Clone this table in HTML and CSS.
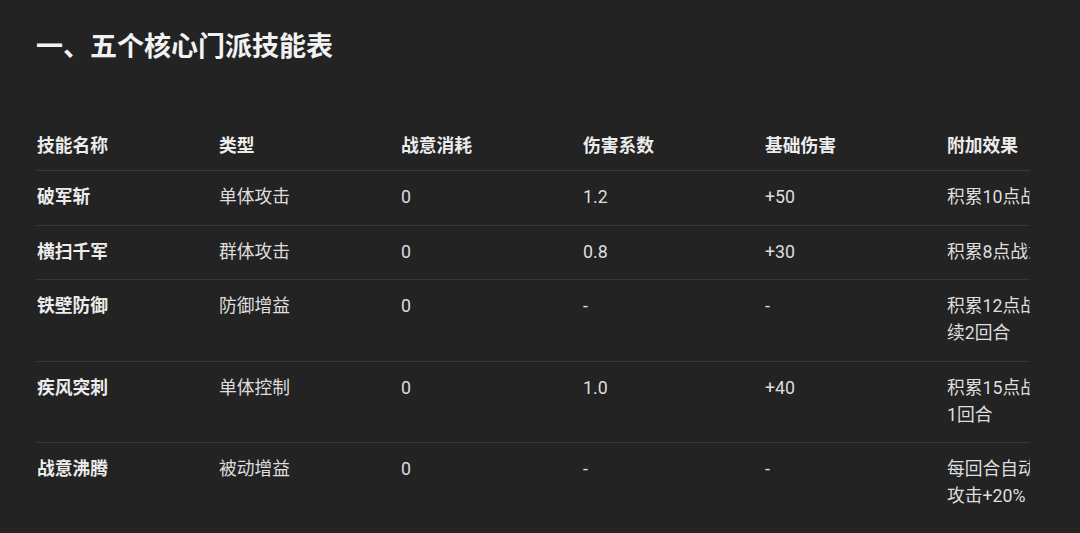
FILE: index.html
```html
<!DOCTYPE html>
<html lang="zh-CN">
<head>
<meta charset="utf-8">
<title>五个核心门派技能表</title>
<link rel="stylesheet" href="styles.css">
</head>
<body>
<main class="page">
  <h2 class="title">一、五个核心门派技能表</h2>
  <div class="table-wrap">
    <table class="skills">
      <colgroup>
        <col class="c"><col class="c"><col class="c"><col class="c"><col class="c"><col class="c-last">
      </colgroup>
      <thead>
        <tr>
          <th>技能名称</th><th>类型</th><th>战意消耗</th><th>伤害系数</th><th>基础伤害</th><th>附加效果</th>
        </tr>
      </thead>
      <tbody>
        <tr>
          <td class="name">破军斩</td><td>单体攻击</td><td>0</td><td>1.2</td><td>+50</td><td>积累10点战意</td>
        </tr>
        <tr>
          <td class="name">横扫千军</td><td>群体攻击</td><td>0</td><td>0.8</td><td>+30</td><td>积累8点战意</td>
        </tr>
        <tr>
          <td class="name">铁壁防御</td><td>防御增益</td><td>0</td><td>-</td><td>-</td><td>积累12点战意，防御力提升40%，持<br>续2回合</td>
        </tr>
        <tr>
          <td class="name">疾风突刺</td><td>单体控制</td><td>0</td><td>1.0</td><td>+40</td><td>积累15点战意，使目标眩晕<br>1回合</td>
        </tr>
        <tr>
          <td class="name">战意沸腾</td><td>被动增益</td><td>0</td><td>-</td><td>-</td><td>每回合自动获得5点战意，战意满时<br>攻击+20%</td>
        </tr>
      </tbody>
    </table>
  </div>
</main>
</body>
</html>
```

FILE: styles.css
```css
html, body {
  margin: 0;
  padding: 0;
  background: #232323;
}

body {
  font-family: Roboto, "Noto Sans CJK SC", "Noto Sans", sans-serif;
  color: #e2e2e2;
}

.page {
  padding: 28px 50px 0 36px;
}

.title {
  margin: 0;
  font-size: 27px;
  line-height: 38px;
  font-weight: 700;
  color: #f2f2f2;
}

.table-wrap {
  margin-top: 54px;
  width: 994px;
  overflow-x: auto;
  scrollbar-width: none;
}

.skills {
  border-collapse: collapse;
  table-layout: fixed;
  width: 1310px;
  font-size: 17.75px;
  line-height: 27px;
}

.skills .c {
  width: 182px;
}

.skills .c-last {
  width: 400px;
}

.skills th,
.skills td {
  text-align: left;
  vertical-align: top;
  padding: 13px 16px 13.5px 1px;
  white-space: nowrap;
}

.skills th {
  font-weight: 700;
  color: #ececec;
  padding-bottom: 10px;
  border-bottom: 1px solid #3a3a3a;
}

.skills td {
  font-weight: 400;
  color: #dedede;
}

.skills tbody tr + tr td {
  border-top: 1px solid #363636;
}

.skills td.name {
  font-weight: 700;
  color: #ececec;
}
```
